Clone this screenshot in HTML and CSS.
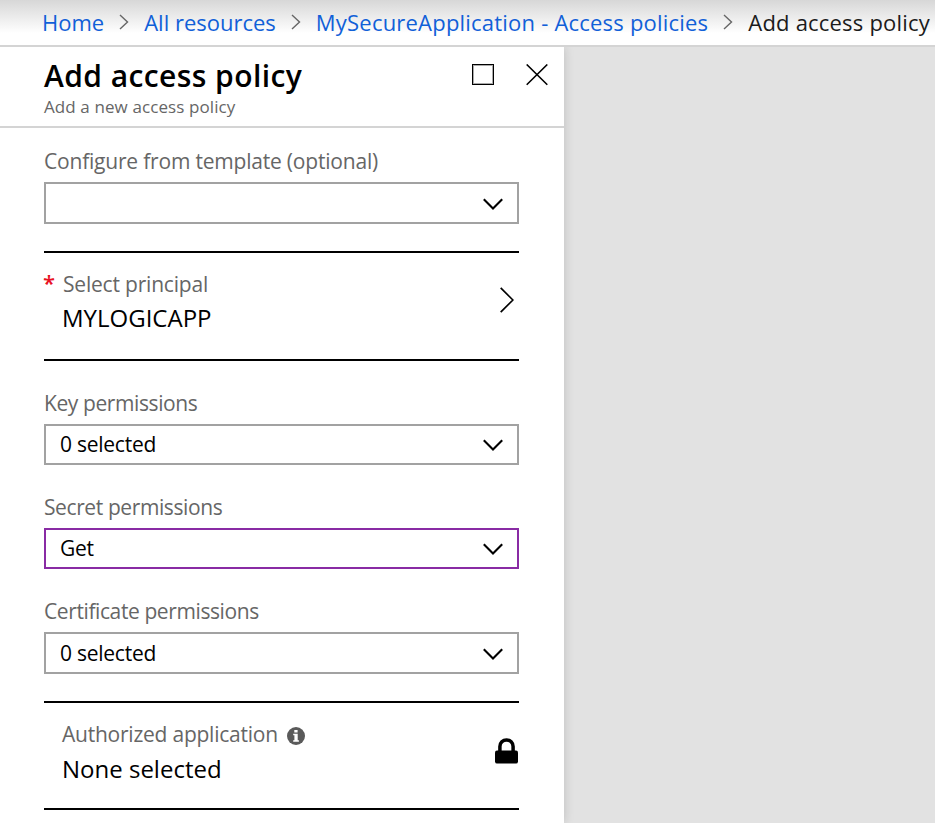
FILE: index.html
```html
<!DOCTYPE html>
<html lang="en">
<head>
<meta charset="utf-8">
<title>Add access policy</title>
<link rel="stylesheet" href="styles.css">
</head>
<body>
<nav class="breadcrumb">
  <a class="crumb crumb-home">Home</a>
  <svg class="sep" viewBox="0 0 10 16"><path d="M1 1l7.5 7L1 15"/></svg>
  <a class="crumb crumb-all">All resources</a>
  <svg class="sep" viewBox="0 0 10 16"><path d="M1 1l7.5 7L1 15"/></svg>
  <a class="crumb crumb-app">MySecureApplication - Access policies</a>
  <svg class="sep" viewBox="0 0 10 16"><path d="M1 1l7.5 7L1 15"/></svg>
  <span class="crumb current">Add access policy</span>
</nav>
<div class="workspace">
  <main class="blade">
    <header class="blade-header">
      <div class="titles">
        <h1 class="title">Add access policy</h1>
        <p class="subtitle">Add a new access policy</p>
      </div>
      <div class="actions">
        <svg class="maximize" viewBox="0 0 22 22"><rect x="1.5" y="1.5" width="19" height="18" stroke="#aaa"/><rect x="0.5" y="0.5" width="21" height="20" stroke="#000"/></svg>
        <svg class="close" viewBox="0 0 22 22"><path d="M.7.5l20.6 20.2M21.3.5L.7 20.7"/></svg>
      </div>
    </header>
    <form class="form">
      <div class="field template">
        <label class="label l-template">Configure from template (optional)</label>
        <div class="select"><span></span><svg class="chevron" viewBox="0 0 20 12"><path d="M.8 1.2l9.2 9.2 9.2-9.2"/></svg></div>
      </div>
      <section class="picker principal">
        <div class="picker-text">
          <div class="label"><b class="required">*</b><span class="l-principal">Select principal</span></div>
          <div class="value v-app">MYLOGICAPP</div>
        </div>
        <svg class="arrow" viewBox="0 0 14 26"><path d="M.7.8l12.2 12.2L.7 25.2"/></svg>
      </section>
      <div class="field">
        <label class="label">Key permissions</label>
        <div class="select"><span>0 selected</span><svg class="chevron" viewBox="0 0 20 12"><path d="M.8 1.2l9.2 9.2 9.2-9.2"/></svg></div>
      </div>
      <div class="field">
        <label class="label">Secret permissions</label>
        <div class="select active"><span>Get</span><svg class="chevron" viewBox="0 0 20 12"><path d="M.8 1.2l9.2 9.2 9.2-9.2"/></svg></div>
      </div>
      <div class="field cert">
        <label class="label">Certificate permissions</label>
        <div class="select"><span>0 selected</span><svg class="chevron" viewBox="0 0 20 12"><path d="M.8 1.2l9.2 9.2 9.2-9.2"/></svg></div>
      </div>
      <section class="picker authorized">
        <div class="picker-text">
          <div class="label"><span class="l-auth">Authorized application</span><svg class="info" viewBox="0 0 18 18"><circle cx="9" cy="9" r="9"/><path d="M7.3 3.1h3.3v2.4H7.3zM6.2 6.8h4.5v6.5h1.2v1.5H6.2v-1.5h1.2V8.3H6.2z"/></svg></div>
          <div class="value v-none">None selected</div>
        </div>
        <svg class="lock" viewBox="0 0 23 26"><path class="shackle" d="M4.9 14V8.5a6.6 6.6 0 0 1 13.2 0V14"/><rect x="0" y="12.5" width="23" height="13" rx="2"/></svg>
      </section>
    </form>
  </main>
</div>
</body>
</html>
```
FILE: styles.css
```css
* { box-sizing: border-box; }
body { margin: 0; height: 823px; overflow: hidden; font-family: "Open Sans", "Noto Sans", sans-serif; font-size: 21px; color: #000; background: #e2e2e2; }
svg { display: block; flex: none; fill: none; stroke: #000; }
.breadcrumb { display: flex; align-items: center; height: 47px; padding: 0 0 2px 42px; white-space: nowrap; border-bottom: 2px solid #d4d4d4; background: linear-gradient(#d7d7d7, #fff 33px); }
.crumb { color: #1160d8; font-size: 22px; line-height: 30px; }
.crumb-app { letter-spacing: .21px; }
.current { color: #1b1b1b; letter-spacing: .2px; }
.sep { width: 10px; height: 16px; margin: 0 15px; stroke: #666; stroke-width: 1.4; }
.workspace { display: flex; height: 776px; overflow: hidden; }
.blade { flex: none; width: 564px; background: #fff; box-shadow: 0 0 10px rgba(0,0,0,.16); }
.blade-header { display: flex; justify-content: space-between; height: 81px; padding: 9px 16px 0 44px; border-bottom: 2px solid #d4d4d4; }
.title { margin: 0; font-size: 30px; font-weight: 600; line-height: 40px; letter-spacing: .42px; white-space: nowrap; }
.subtitle { margin: -1px 0 0; color: #666; font-size: 17px; line-height: 23px; letter-spacing: .1px; }
.actions { display: flex; gap: 32px; padding-top: 8px; }
.maximize, .close { width: 22px; height: 22px; }
.close { stroke-width: 1.6; }
.form { display: flex; flex-direction: column; width: 475px; margin-left: 44px; }
.label { display: flex; align-items: center; height: 30px; color: #666; letter-spacing: -.4px; white-space: nowrap; }
.field { padding-top: 27px; }
.field .label { margin-bottom: 6px; }
.field.template { padding-top: 18px; }
.l-template, .l-principal { letter-spacing: -.2px; }
.l-auth { letter-spacing: -.23px; }
.select { display: flex; align-items: center; justify-content: space-between; height: 41px; padding: 0 14px; border: 2px solid #a2a2a2; letter-spacing: -.25px; }
.select span { margin-top: -2px; }
.template .select, .cert .select { height: 42px; padding-top: 1px; }
.select.active { border-color: #892ba4; }
.chevron { width: 20px; height: 12px; stroke-width: 2.1; }
.picker { display: flex; justify-content: space-between; align-items: center; height: 110px; margin-top: 27px; border: solid #000; border-width: 2px 0; }
.authorized { height: 109px; }
.picker-text { padding: 0 0 7px 18px; }
.principal .picker-text { padding-bottom: 9px; }
.required { align-self: flex-start; margin-left: -19px; width: 20px; color: #e81123; font-size: 22px; font-weight: 600; line-height: 27px; }
.value { height: 36px; font-size: 24px; line-height: 38px; }
.v-none { line-height: 40px; }
.arrow { width: 14px; height: 26px; margin: -12px 5px 0 0; stroke-width: 1.7; }
.info { width: 18px; height: 18px; margin: 3px 0 0 9px; stroke: none; }
.info circle { fill: #5a5a5a; }
.info path { fill: #fff; }
.lock { width: 23px; height: 26px; margin: -10px 1px 0 0; fill: #000; stroke: none; }
.lock .shackle { fill: none; stroke: #000; stroke-width: 3.5; }
```
